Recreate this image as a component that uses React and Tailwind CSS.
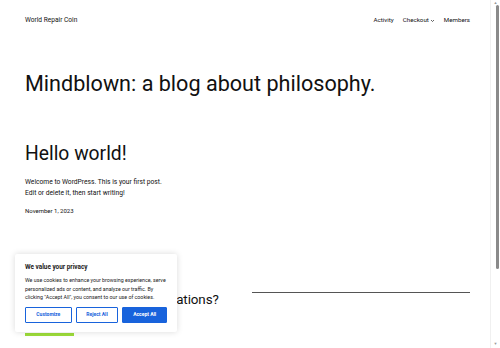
import React from "react";

const font = { fontFamily: "Roboto, 'Liberation Sans', sans-serif" };

const CookieBanner = () => (
  <div className="absolute left-[15px] top-[254px] w-[162px] h-[78px] bg-white rounded-[2px] shadow-[0_0_6px_rgba(0,0,0,0.15)] px-[10px] pt-[9px]">
    <p className="text-[6.4px] font-bold text-[#212121] leading-[8px]">We value your privacy</p>
    <p className="mt-[5px] text-[5.3px] leading-[8.6px] text-[#212121]">
      We use cookies to enhance your browsing experience, serve personalized ads or content, and analyze our traffic. By clicking "Accept All", you consent to our use of cookies.
    </p>
    <div className="mt-[5px] flex gap-[4px]">
      <button className="w-[47px] h-[16px] border border-[#1863dc] rounded-[1px] text-[5px] font-bold text-[#1863dc]">Customize</button>
      <button className="w-[43px] h-[16px] border border-[#1863dc] rounded-[1px] text-[5px] font-bold text-[#1863dc]">Reject All</button>
      <button className="w-[45px] h-[16px] bg-[#1863dc] border border-[#1863dc] rounded-[1px] text-[5px] font-bold text-white">Accept All</button>
    </div>
  </div>
);

const Scrollbar = () => (
  <div className="w-[10px] h-[348px] flex flex-col items-center border-l border-[#f0f0f0] bg-white">
    <div className="text-[4px] leading-[5px] text-[#999]">▲</div>
    <div className="w-[3px] h-[264px] bg-[#8a8a8a] rounded-full ml-[3px]"></div>
    <div className="flex-1"></div>
    <div className="text-[4px] leading-[5px] text-[#999] mb-[2px]">▼</div>
  </div>
);

export default function App() {
  return (
    <div className="relative w-[500px] h-[348px] overflow-hidden bg-white flex" style={font}>
      <div className="flex-1 pl-[25px] pr-[20px] text-[#111]">
        {/* Header */}
        <header className="h-[42px] flex items-center justify-between">
          <span className="text-[6.6px]">World Repair Coin</span>
          <nav className="flex items-center gap-[9px] text-[6.2px]">
            <span>Activity</span>
            <span className="flex items-center gap-[1px]">
              Checkout
              <svg width="5" height="5" viewBox="0 0 10 10" fill="none" stroke="#111" strokeWidth="1.3"><path d="M2 4l3 3 3-3" /></svg>
            </span>
            <span>Members</span>
          </nav>
        </header>

        <h1 className="mt-[28px] text-[21.6px] leading-[28px]">Mindblown: a blog about philosophy.</h1>

        <h2 className="mt-[44px] text-[19.3px] leading-[24px]">Hello world!</h2>
        <p className="mt-[11px] text-[6.7px] leading-[11px]">
          Welcome to WordPress. This is your first post.<br />Edit or delete it, then start writing!
        </p>
        <p className="mt-[8px] text-[6px] leading-[8px]">November 1, 2023</p>

        <div className="mt-[75px] flex">
          <div className="w-[227px]">
            <h3 className="mt-[1px] text-[13.4px] leading-[18px] whitespace-nowrap tracking-[-0.1px]">Got any book recommendations?</h3>
            <div className="mt-[24px] w-[49px] h-[3px] bg-[#9ddc3a]"></div>
          </div>
          <div className="flex-1 border-t border-[#555] h-0 mt-[2px]"></div>
        </div>
      </div>
      <Scrollbar />
      <CookieBanner />
    </div>
  );
}
